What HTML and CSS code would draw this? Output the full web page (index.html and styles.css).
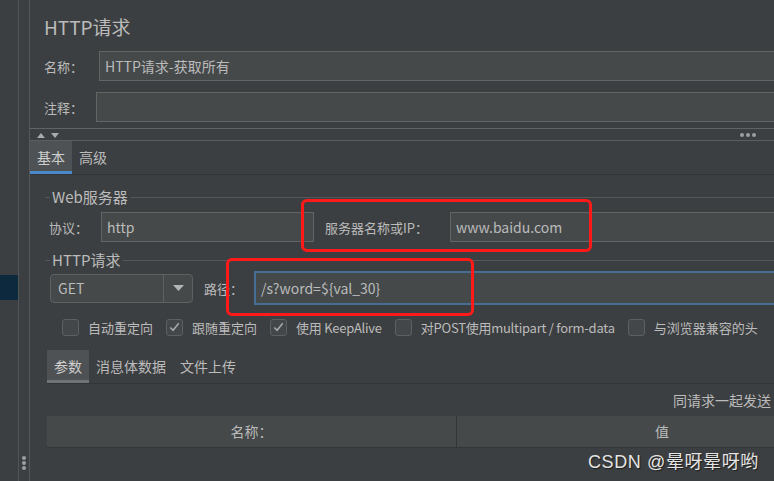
FILE: index.html
```html
<!DOCTYPE html>
<html lang="zh">
<head>
<meta charset="utf-8">
<title>HTTP请求</title>
<link rel="stylesheet" href="styles.css">
</head>
<body>
<div class="app">
  <div class="gutter-tree"><div class="tree-sel"></div></div>
  <div class="gutter-split">
    <div class="vdots"><span></span><span></span><span></span></div>
  </div>
  <div class="main">
    <div class="title">HTTP请求</div>
    <div class="field-row row-name">
      <span class="lbl lbl-name">名称<span class="c">：</span></span>
      <div class="input grow">HTTP请求-获取所有</div>
    </div>
    <div class="field-row row-comment">
      <span class="lbl lbl-comment">注释<span class="c">：</span></span>
      <div class="input grow"></div>
    </div>
    <div class="splitter">
      <svg class="arrows" width="24" height="8" viewBox="0 0 24 8">
        <polygon points="1,7 9,7 5,2" fill="#a9abad"/>
        <polygon points="15,2 23,2 19,7" fill="#a9abad"/>
      </svg>
      <div class="hdots"><span></span><span></span><span></span></div>
    </div>
    <div class="tabbar">
      <div class="tab active-blue">基本</div>
      <div class="tab">高级</div>
    </div>
    <div class="content">
      <div class="group-title"><span class="gl-short"></span><span class="gt">Web服务器</span><span class="gl-long"></span></div>
      <div class="field-row row-server">
        <span class="lbl lbl-proto">协议<span class="c">：</span></span>
        <div class="input proto">http</div>
        <span class="lbl lbl-host">服务器名称或IP<span class="c">：</span></span>
        <div class="input grow">www.baidu.com</div>
      </div>
      <div class="group-title g2"><span class="gl-short"></span><span class="gt">HTTP请求</span><span class="gl-long"></span></div>
      <div class="field-row row-method">
        <div class="combo">
          <span class="combo-val">GET</span>
          <span class="combo-btn">
            <svg width="11" height="6" viewBox="0 0 11 6"><polygon points="0,0 11,0 5.5,6" fill="#b2b4b6"/></svg>
          </span>
        </div>
        <span class="lbl lbl-path">路径<span class="c">：</span></span>
        <div class="input grow focus">/s?word=${val_30}</div>
      </div>
      <div class="checks">
        <div class="check"><span class="box"></span><span>自动重定向</span></div>
        <div class="check"><span class="box"><svg width="16" height="16" viewBox="0 0 16 16"><path d="M3.5 8.5 L6.5 11.5 L12.5 4" fill="none" stroke="#a6a8aa" stroke-width="1.7"/></svg></span><span>跟随重定向</span></div>
        <div class="check"><span class="box"><svg width="16" height="16" viewBox="0 0 16 16"><path d="M3.5 8.5 L6.5 11.5 L12.5 4" fill="none" stroke="#a6a8aa" stroke-width="1.7"/></svg></span><span class="tight">使用 KeepAlive</span></div>
        <div class="check"><span class="box"></span><span class="tight">对POST使用multipart / form-data</span></div>
        <div class="check"><span class="box"></span><span>与浏览器兼容的头</span></div>
      </div>
      <div class="lower">
        <div class="tabbar tabbar-lower">
          <div class="tab active-gray">参数</div>
          <div class="tab">消息体数据</div>
          <div class="tab">文件上传</div>
        </div>
        <div class="send-row">同请求一起发送</div>
        <div class="table-head">
          <div class="th">名称<span class="c">：</span></div>
          <div class="th">值</div>
        </div>
      </div>
    </div>
  </div>
</div>
<div class="mark mark-host"></div>
<div class="mark mark-path"></div>
<div class="watermark">CSDN @晕呀晕呀哟</div>
</body>
</html>
```

FILE: styles.css
```css
html, body {
  margin: 0;
  padding: 0;
  width: 774px;
  height: 481px;
  overflow: hidden;
  background: #3c3f41;
}
body {
  position: relative;
  font-family: "Noto Sans CJK SC", "Noto Sans", sans-serif;
  font-size: 13px;
  color: #bbbbbb;
}
.c {
  font-family: "Noto Sans CJK TC", "Noto Sans CJK SC", sans-serif;
}
.app {
  display: flex;
  height: 481px;
}
.gutter-tree {
  width: 18px;
  border-right: 1px solid #515456;
  flex: none;
}
.tree-sel {
  margin-top: 275px;
  height: 25px;
  background: #0d293e;
}
.gutter-split {
  width: 11px;
  border-right: 1px solid #56595b;
  flex: none;
  display: flex;
  flex-direction: column;
  justify-content: flex-end;
  align-items: center;
  padding-bottom: 11px;
  box-sizing: border-box;
}
.vdots {
  display: flex;
  flex-direction: column;
  gap: 1px;
}
.vdots span, .hdots span {
  width: 4px;
  height: 4px;
  border-radius: 50%;
  background: #9c9ea0;
}
.main {
  flex: 1;
  min-width: 0;
  overflow: hidden;
}
.title {
  padding: 14px 0 0 14px;
  line-height: 26px;
  height: 26px;
  font-size: 19px;
}
.field-row {
  display: flex;
  align-items: center;
}
.row-name { margin-top: 11px; padding-left: 14px; }
.row-comment { margin-top: 11px; padding-left: 14px; }
.lbl { flex: none; white-space: nowrap; }
.lbl-name { width: 55px; }
.lbl-comment { width: 52px; }
.input {
  box-sizing: border-box;
  height: 30px;
  line-height: 28px;
  border: 1px solid #646464;
  background: #45494a;
  padding-left: 5px;
  font-size: 14px;
  white-space: nowrap;
}
.grow {
  flex: 1;
  margin-right: -20px;
}
.splitter {
  margin-top: 6px;
  height: 11px;
  border-top: 1px solid #606264;
  border-bottom: 1px solid #5b5d5f;
  display: flex;
  align-items: center;
  justify-content: space-between;
  padding: 0 18px 0 6px;
}
.arrows { display: block; }
.hdots {
  display: flex;
  gap: 2px;
}
.tabbar {
  display: flex;
  height: 33px;
  border-bottom: 1px solid #323436;
}
.tab {
  padding: 0 7px;
  line-height: 33px;
  font-size: 14px;
  box-sizing: border-box;
  height: 33px;
}
.tab.active-blue {
  background: #4e5254;
  border-bottom: 3px solid #4a88c7;
  line-height: 32px;
  color: #cfcfcf;
}
.content {
  padding-left: 15px;
}
.group-title {
  display: flex;
  align-items: center;
  margin-top: 13px;
  height: 18px;
}
.group-title.g2 { margin-top: 9px; }
.gl-short {
  width: 5px;
  height: 1px;
  background: #55585a;
}
.gl-long {
  flex: 1;
  height: 1px;
  background: #55585a;
  margin-right: -20px;
}
.gt {
  padding: 0 3px 0 2px;
  font-size: 15px;
  line-height: 18px;
}
.row-server {
  margin-top: 6px;
  padding-left: 4px;
}
.lbl-proto { width: 52px; }
.proto { width: 213px; flex: none; }
.lbl-host { margin-left: 11px; width: 125px; }
.row-method {
  margin-top: 2px;
  padding-left: 5px;
  height: 34px;
}
.combo {
  box-sizing: border-box;
  width: 143px;
  height: 29px;
  border: 1px solid #5e6163;
  border-radius: 4px;
  background: #45494a;
  display: flex;
  flex: none;
}
.combo-val {
  flex: 1;
  line-height: 27px;
  padding-left: 7px;
  font-size: 14px;
}
.combo-btn {
  width: 28px;
  border-left: 1px solid #5e6163;
  display: flex;
  align-items: center;
  justify-content: center;
}
.combo-btn svg { display: block; }
.lbl-path { margin-left: 11px; width: 50px; }
.input.focus {
  height: 34px;
  line-height: 30px;
  border: 2px solid #466d94;
  padding-left: 5px;
}
.checks {
  display: flex;
  align-items: center;
  margin-top: 13px;
  padding-left: 17px;
  gap: 13px;
  height: 18px;
  white-space: nowrap;
}
.check {
  display: flex;
  align-items: center;
  gap: 9px;
}
.tight { letter-spacing: -0.25px; }
.box {
  box-sizing: border-box;
  width: 17px;
  height: 17px;
  border: 1px solid #5c6062;
  border-radius: 3px;
  background: #43474a;
  display: flex;
  align-items: center;
  justify-content: center;
}
.box svg { display: block; }
.lower {
  margin-top: 14px;
  padding-left: 2px;
  margin-right: -120px;
}
.tabbar-lower .tab.active-gray {
  background: #4e5254;
  border-bottom: 3px solid #6f7376;
  line-height: 32px;
  color: #cfcfcf;
}
.send-row {
  height: 32px;
  line-height: 32px;
  text-align: right;
  padding-right: 123px;
  font-size: 14px;
}
.table-head {
  display: grid;
  grid-template-columns: 409px 411px;
  height: 31px;
  background: #45494a;
  border-bottom: 1px solid #333537;
}
.th {
  text-align: center;
  line-height: 31px;
  font-size: 14px;
}
.th + .th { border-left: 1px solid #333537; }
.mark {
  position: absolute;
  box-sizing: border-box;
  border: 3px solid #ff1a1a;
  border-radius: 6px;
}
.mark-host { left: 301px; top: 199px; width: 291px; height: 53px; }
.mark-path { left: 226px; top: 258px; width: 248px; height: 58px; }
.watermark {
  position: absolute;
  left: 588px;
  top: 447px;
  font-family: "Liberation Sans", "Noto Sans CJK SC", sans-serif;
  font-size: 18px;
  letter-spacing: 0.6px;
  color: #e4e4e4;
  text-shadow: 1px 1px 1px #1c1c1c;
  white-space: nowrap;
}
```
